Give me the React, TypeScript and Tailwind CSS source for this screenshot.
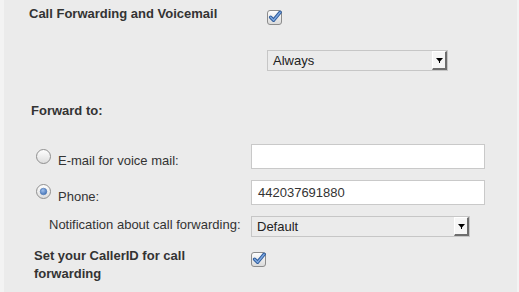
import React from "react";

function CheckBox() {
  return (
    <svg width="16" height="16" viewBox="0 0 16 16" className="block">
      <defs>
        <linearGradient id="cbg" x1="0" y1="0" x2="0" y2="1">
          <stop offset="0" stopColor="#ffffff" />
          <stop offset="1" stopColor="#d9d9d9" />
        </linearGradient>
      </defs>
      <rect x="0.5" y="1.5" width="14" height="14" rx="2.5" fill="url(#cbg)" stroke="#8c8c8c" />
      <path d="M3.6 8.2 L6.6 11.2 L13.2 3.2" fill="none" stroke="#2e5c9c" strokeWidth="3.4" strokeLinecap="round" strokeLinejoin="round" />
      <path d="M3.6 8.2 L6.6 11.2 L13.2 3.2" fill="none" stroke="#7fa8e0" strokeWidth="1.4" strokeLinecap="round" strokeLinejoin="round" />
    </svg>
  );
}

function Radio({ checked }: { checked?: boolean }) {
  return (
    <svg width="15" height="15" viewBox="0 0 15 15" className="block">
      <defs>
        <linearGradient id="rbg" x1="0" y1="0" x2="0" y2="1">
          <stop offset="0" stopColor="#ffffff" />
          <stop offset="1" stopColor="#dcdcdc" />
        </linearGradient>
        <radialGradient id="rdot" cx="0.4" cy="0.35" r="0.7">
          <stop offset="0" stopColor="#9fc0ee" />
          <stop offset="1" stopColor="#3f6fb3" />
        </radialGradient>
      </defs>
      <circle cx="7.5" cy="7.5" r="7" fill="url(#rbg)" stroke="#8f8f8f" />
      {checked && <circle cx="7.5" cy="7.5" r="3.3" fill="url(#rdot)" stroke="#4a76b4" strokeWidth="0.6" />}
    </svg>
  );
}

function Select({ value, width }: { value: string; width: string }) {
  return (
    <div className={`${width} h-[21px] flex items-stretch border border-[#c6c6c6] bg-[#ebebeb]`}>
      <div className="flex-1 pl-[5px] leading-[19px] text-[13px] text-[#222]">{value}</div>
      <div className="w-[15px] bg-[#f6f6f6] border-l border-t border-white border-r-2 border-b-2 border-r-[#6e6e6e] border-b-[#6e6e6e] flex items-center justify-center">
        <svg width="7" height="7" viewBox="0 0 7 7" className="block">
          <path d="M0 1 L7 1 L3.5 5 Z" fill="#000" />
          <rect x="3" y="4" width="1" height="2" fill="#000" />
        </svg>
      </div>
    </div>
  );
}

export default function App() {
  return (
    <div className="w-[519px] h-[292px] bg-[#f3f3f3] pl-[4px] pr-[2px] font-['Liberation_Sans',Arial,sans-serif] text-[13px] text-[#333] overflow-hidden">
      <div className="h-full bg-[#ebebeb]">
        {/* Row 1 */}
        <div className="flex h-[30px]">
          <div className="w-[263px] pl-[25px] pt-[6px] font-bold leading-[15px]">Call Forwarding and Voicemail</div>
          <div className="mt-[9px]">
            <CheckBox />
          </div>
        </div>
        {/* Row 2 */}
        <div className="mt-[20px] pl-[263px]">
          <Select value="Always" width="w-[181px]" />
        </div>
        {/* Forward to */}
        <div className="mt-[32px] pl-[27px] font-bold leading-[15px]">Forward to:</div>
        {/* E-mail */}
        <div className="mt-[26px] flex h-[25px]">
          <div className="w-[247px] flex pl-[32px]">
            <div className="mt-[5px]">
              <Radio />
            </div>
            <div className="ml-[7px] mt-[9px] leading-[15px]">E-mail for voice mail:</div>
          </div>
          <div className="w-[234px] h-[25px] bg-white border border-[#c9c9c9]"></div>
        </div>
        {/* Phone */}
        <div className="mt-[11px] flex h-[25px]">
          <div className="w-[247px] flex pl-[32px]">
            <div className="mt-[4px]">
              <Radio checked />
            </div>
            <div className="ml-[7px] mt-[9px] leading-[15px]">Phone:</div>
          </div>
          <div className="w-[234px] h-[25px] bg-white border border-[#c9c9c9] pl-[6px] leading-[23px] text-[#333]">442037691880</div>
        </div>
        {/* Notification */}
        <div className="mt-[11px] flex">
          <div className="w-[247px] pl-[45px] pt-[1px] leading-[15px]">Notification about call forwarding:</div>
          <Select value="Default" width="w-[219px]" />
        </div>
        {/* CallerID */}
        <div className="mt-[10px] flex">
          <div className="w-[247px] pl-[30px] pr-[10px] font-bold leading-[18px]">Set your CallerID for call forwarding</div>
          <div className="mt-[4px]">
            <CheckBox />
          </div>
        </div>
      </div>
    </div>
  );
}
